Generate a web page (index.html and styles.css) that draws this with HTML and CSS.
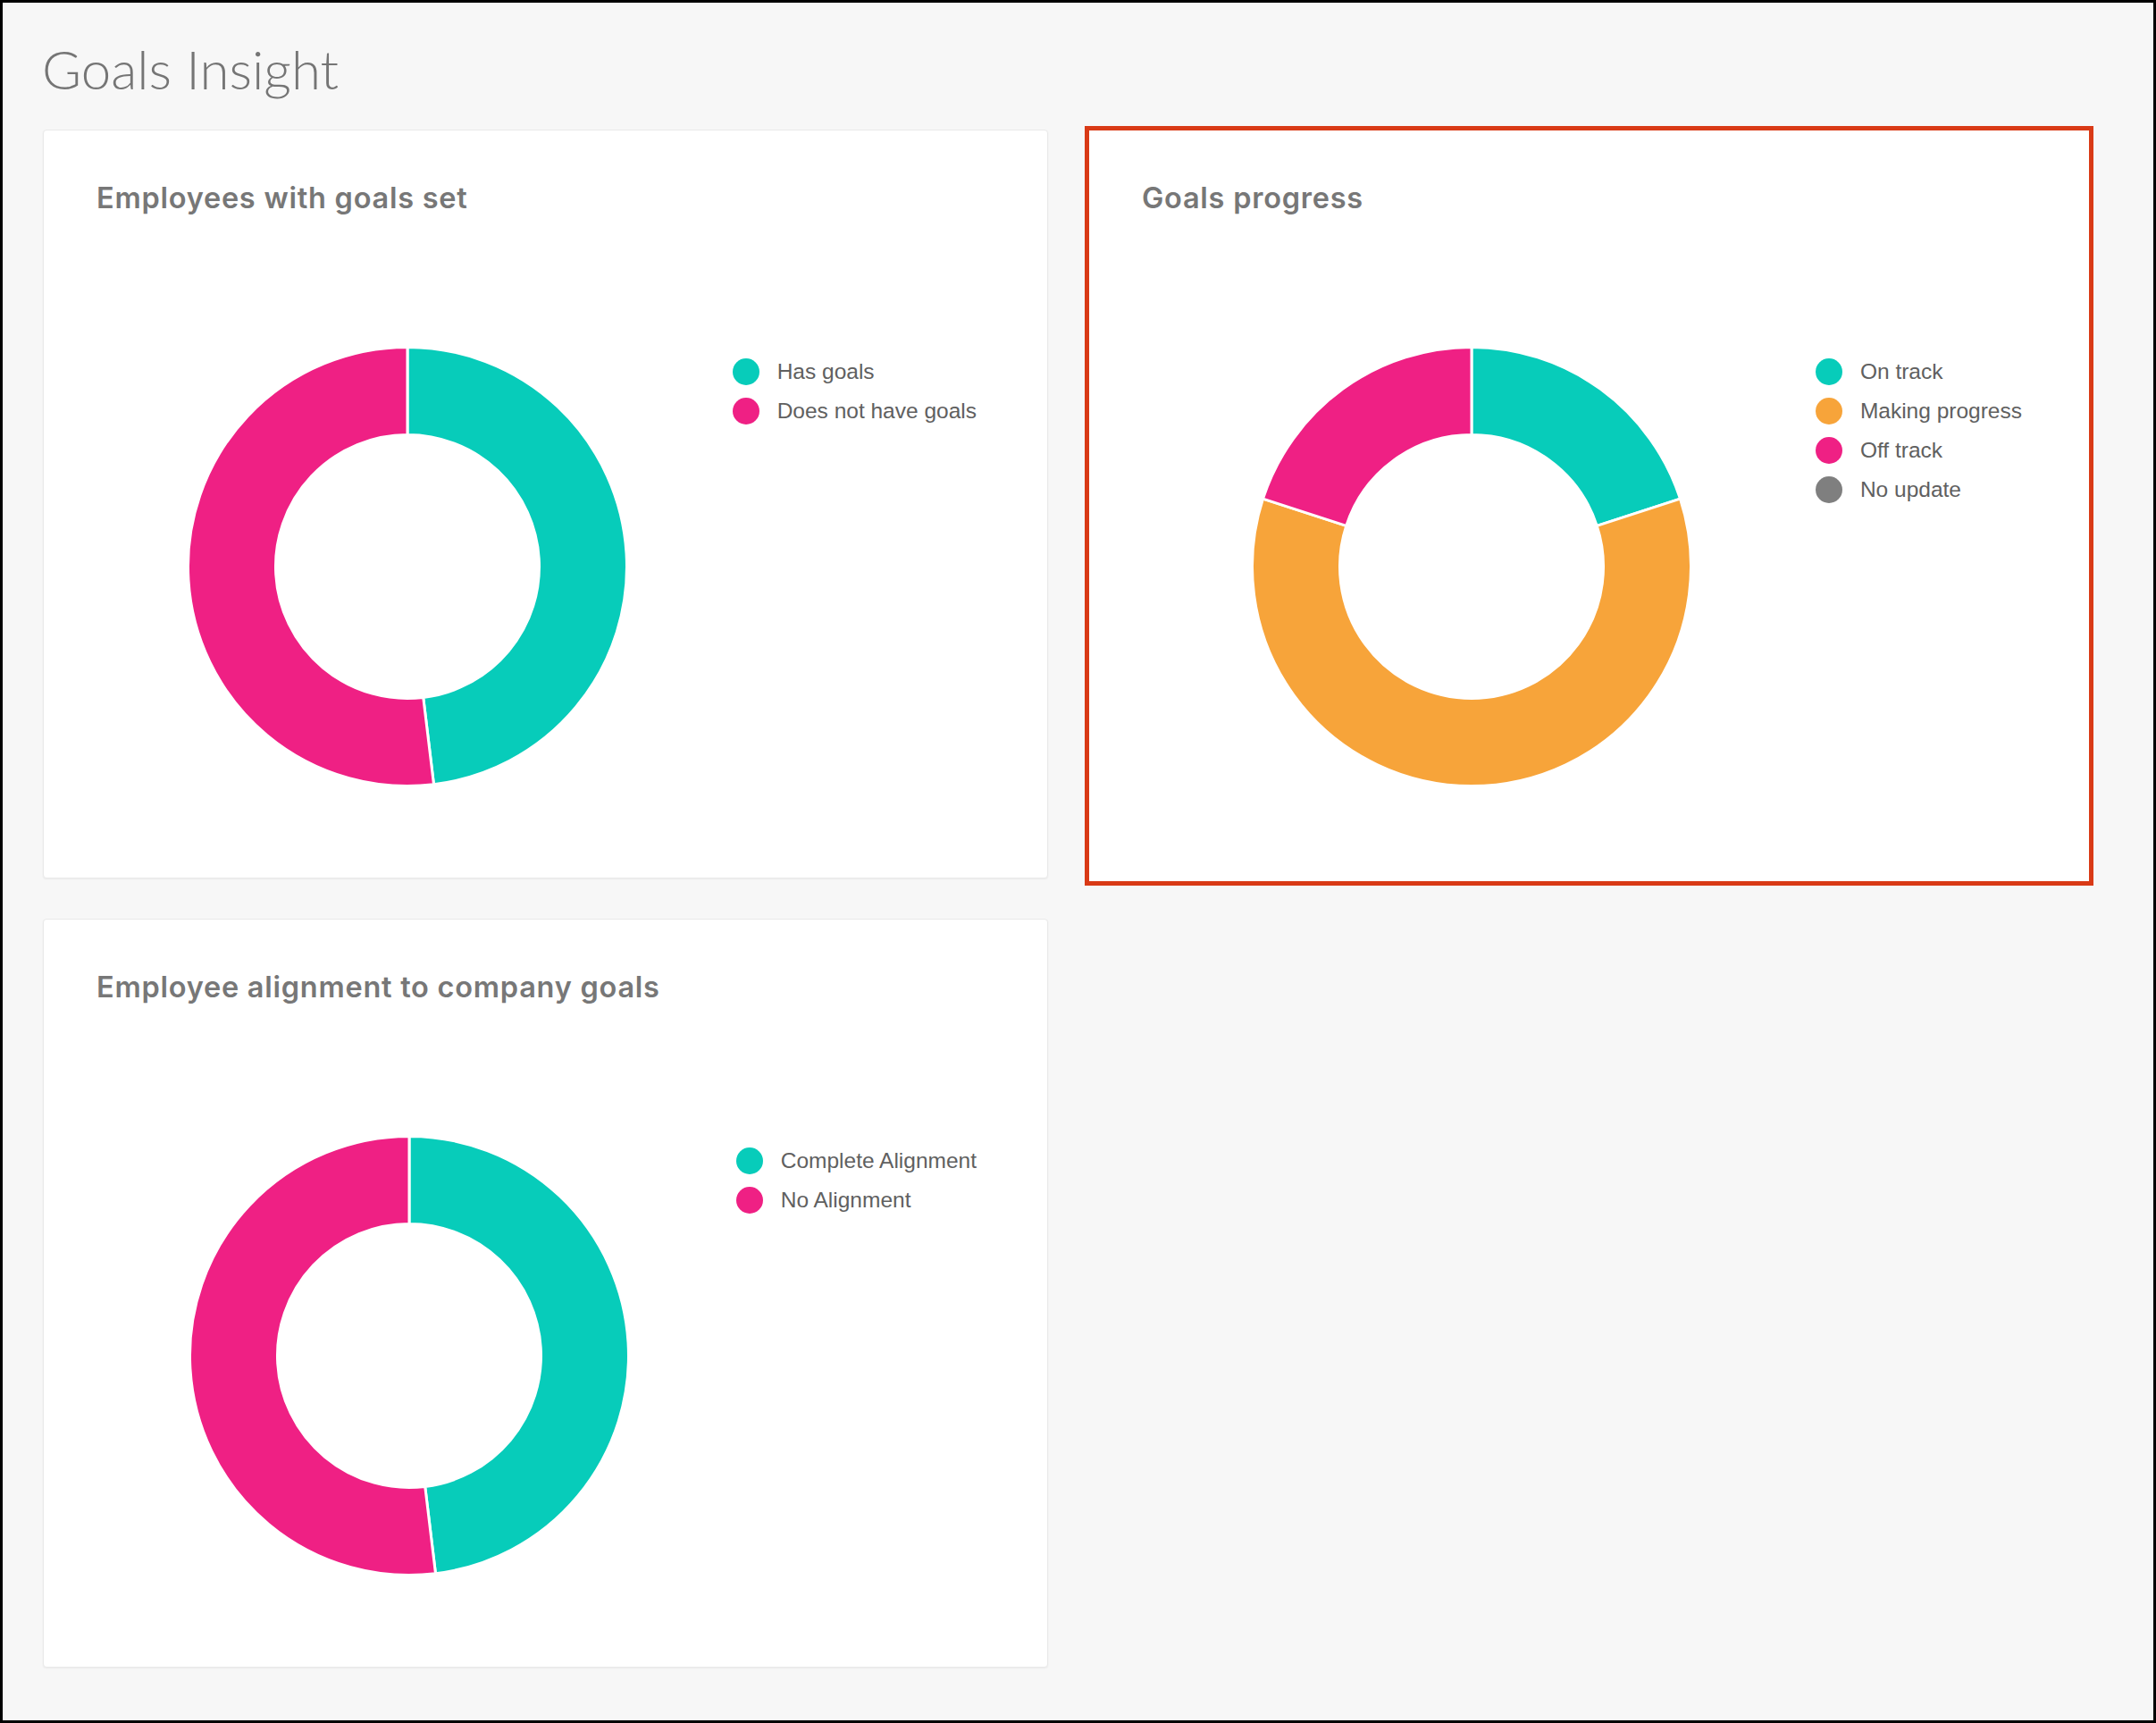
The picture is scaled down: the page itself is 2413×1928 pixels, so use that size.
FILE: index.html
```html
<!DOCTYPE html>
<html lang="en">
<head>
<meta charset="utf-8">
<title>Goals Insight</title>
<link rel="stylesheet" href="styles.css">
</head>
<body>
<div class="frame">
  <h1 class="page-title">Goals Insight</h1>
  <div class="grid">
    <section class="card">
      <h2 class="card-title">Employees with goals set</h2>
      <div class="chart-row">
        <div class="donut-area">
          <svg class="donut" width="500" height="500" viewBox="0 0 500 500">
            <path class="teal" d="M250 4.5 A245.5 245.5 0 0 1 279.49 493.72 L267.72 396.43 A147.5 147.5 0 0 0 250 102.5 Z"/>
            <path class="pink" d="M279.49 493.72 A245.5 245.5 0 1 1 250 4.5 L250 102.5 A147.5 147.5 0 1 0 267.72 396.43 Z"/>
          </svg>
        </div>
        <ul class="legend">
          <li class="legend-item"><span class="dot dot-teal"></span>Has goals</li>
          <li class="legend-item"><span class="dot dot-pink"></span>Does not have goals</li>
        </ul>
      </div>
    </section>
    <section class="card card--highlight">
      <h2 class="card-title">Goals progress</h2>
      <div class="chart-row">
        <div class="donut-area">
          <svg class="donut" width="500" height="500" viewBox="0 0 500 500">
            <path class="teal" d="M250 4.5 A245.5 245.5 0 0 1 483.49 174.14 L390.28 204.42 A147.5 147.5 0 0 0 250 102.5 Z"/>
            <path class="orange" d="M483.49 174.14 A245.5 245.5 0 1 1 16.51 174.14 L109.72 204.42 A147.5 147.5 0 1 0 390.28 204.42 Z"/>
            <path class="pink" d="M16.51 174.14 A245.5 245.5 0 0 1 250 4.5 L250 102.5 A147.5 147.5 0 0 0 109.72 204.42 Z"/>
          </svg>
        </div>
        <ul class="legend">
          <li class="legend-item"><span class="dot dot-teal"></span>On track</li>
          <li class="legend-item"><span class="dot dot-orange"></span>Making progress</li>
          <li class="legend-item"><span class="dot dot-pink"></span>Off track</li>
          <li class="legend-item"><span class="dot dot-gray"></span>No update</li>
        </ul>
      </div>
    </section>
    <section class="card">
      <h2 class="card-title">Employee alignment to company goals</h2>
      <div class="chart-row">
        <div class="donut-area">
          <svg class="donut" width="500" height="500" viewBox="0 0 500 500">
            <path class="teal" d="M250 4.5 A245.5 245.5 0 0 1 279.49 493.72 L267.72 396.43 A147.5 147.5 0 0 0 250 102.5 Z"/>
            <path class="pink" d="M279.49 493.72 A245.5 245.5 0 1 1 250 4.5 L250 102.5 A147.5 147.5 0 1 0 267.72 396.43 Z"/>
          </svg>
        </div>
        <ul class="legend">
          <li class="legend-item"><span class="dot dot-teal"></span>Complete Alignment</li>
          <li class="legend-item"><span class="dot dot-pink"></span>No Alignment</li>
        </ul>
      </div>
    </section>
  </div>
</div>
</body>
</html>
```
FILE: styles.css
```css
html, body {
  margin: 0;
  padding: 0;
}

body {
  background: #000;
}

.frame {
  box-sizing: border-box;
  width: 2413px;
  height: 1928px;
  border: 3px solid #000;
  background: #f7f7f7;
  padding: 38px 0 0 45px;
  overflow: hidden;
}

.page-title {
  margin: 0 0 32px -1px;
  font-family: Lato, "Liberation Sans", sans-serif;
  font-weight: 300;
  font-size: 60px;
  line-height: 72px;
  color: #757575;
}

.grid {
  display: grid;
  grid-template-columns: 1125px 1125px;
  grid-auto-rows: 838px;
  gap: 45px;
}

.card {
  box-sizing: border-box;
  background: #fff;
  border: 1px solid #e9e9e9;
  border-radius: 4px;
  box-shadow: 0 1px 2px rgba(0, 0, 0, 0.05);
}

.card--highlight {
  margin: -4px 0 -8px -4px;
  border: 5px solid #d93a16;
  border-radius: 0;
  box-shadow: none;
}

.card--highlight .legend {
  margin-right: 75px;
}

.card-title {
  margin: 0;
  padding: 60px 59px 0;
  font-family: Inter, Lato, "Liberation Sans", sans-serif;
  font-weight: 600;
  font-size: 32.5px;
  line-height: 32px;
  letter-spacing: 0.75px;
  color: #777;
}

.chart-row {
  display: flex;
  align-items: flex-start;
  margin-top: 146px;
}

.donut-area {
  flex: 1;
  display: flex;
  justify-content: center;
  padding-left: 62px;
}

.donut {
  display: block;
}

.donut path {
  stroke: #fff;
  stroke-width: 3;
  stroke-linejoin: round;
}

.teal { fill: #07ccba; }
.pink { fill: #ef2084; }
.orange { fill: #f7a43a; }

.legend {
  list-style: none;
  margin: 10px 79px 0 19px;
  padding: 0;
}

.legend-item {
  display: flex;
  align-items: center;
  gap: 20px;
  height: 44px;
  font-family: "Liberation Sans", Arial, sans-serif;
  font-size: 24.5px;
  line-height: 44px;
  color: #606060;
  white-space: nowrap;
}

.dot {
  flex: none;
  width: 30px;
  height: 30px;
  border-radius: 50%;
}

.dot-teal { background: #07ccba; }
.dot-pink { background: #ef2084; }
.dot-orange { background: #f7a43a; }
.dot-gray { background: #7f7f7f; }
```
